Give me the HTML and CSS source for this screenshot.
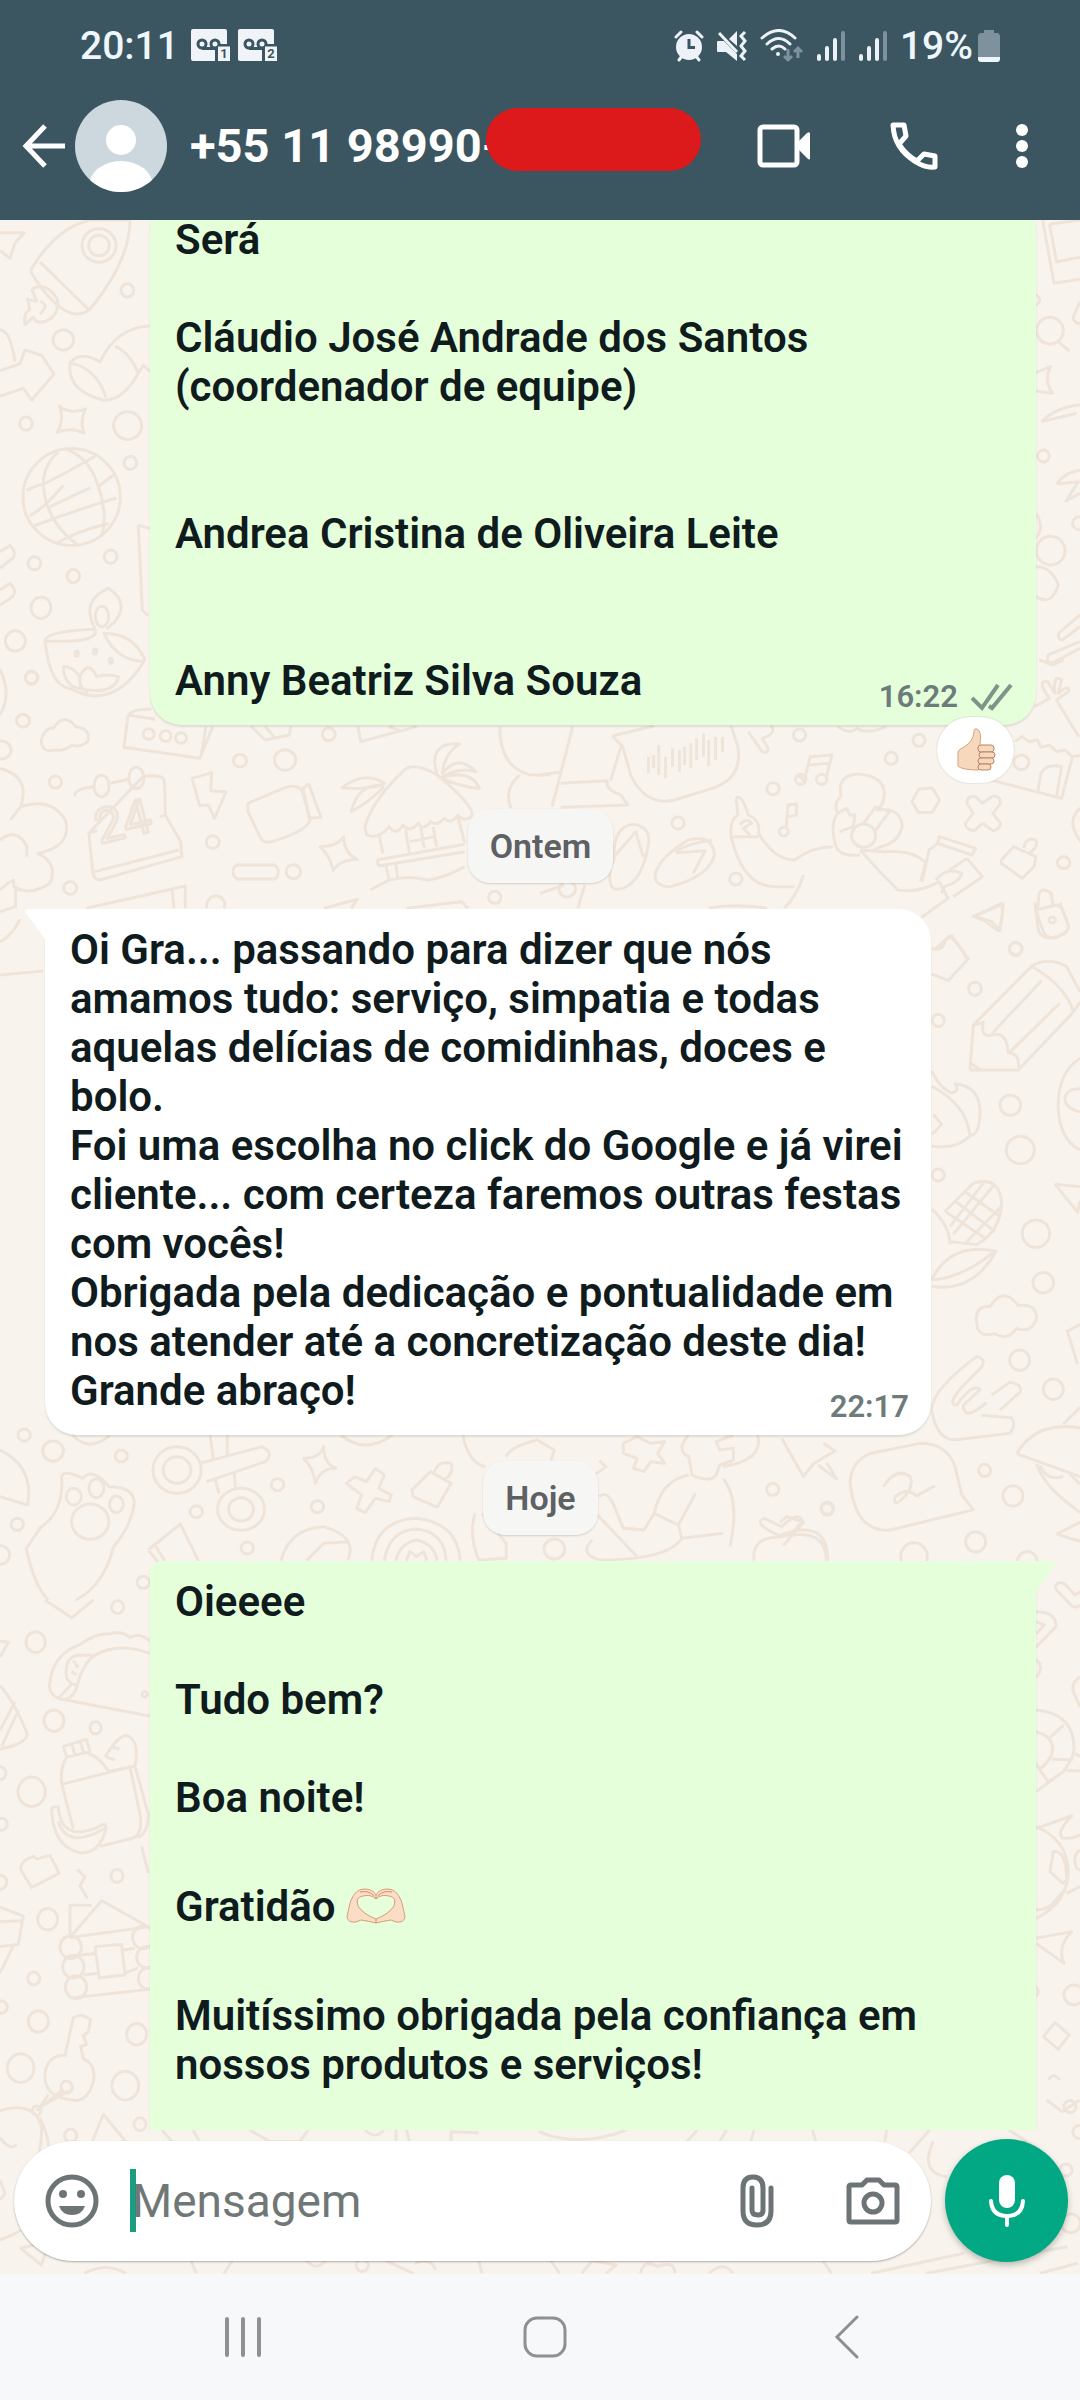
FILE: index.html
```html
<!DOCTYPE html>
<html lang="pt-BR">
<head>
  <meta charset="UTF-8" />
  <meta name="viewport" content="width=device-width, initial-scale=1.0"/>
  <title>+55 11 98990</title>
  <link rel="stylesheet" href="styles.css">
</head>
<body>
  <div class="phone">
    <header class="top">
      <div class="status">
        <span class="clock">20:11</span>
        <svg class="voicemail" width="40" height="34" viewBox="0 0 40 34">
          <path d="M2 0H34Q36 0 36 2V15H28L24 19V32H2Q0 32 0 30V2Q0 0 2 0Z" fill="#f0f4f9"/>
          <g fill="none" stroke="#3b5561" stroke-width="3"><circle cx="11" cy="15" r="4"/><circle cx="24" cy="15" r="4"/><path d="M11 19.500H24"/></g>
          <path d="M27 17.500H39V32H27Z" fill="#f0f4f9"/>
          <text x="33" y="29" text-anchor="middle">1</text>
        </svg>
        <svg class="voicemail" width="40" height="34" viewBox="0 0 40 34">
          <path d="M2 0H34Q36 0 36 2V15H28L24 19V32H2Q0 32 0 30V2Q0 0 2 0Z" fill="#f0f4f9"/>
          <g fill="none" stroke="#3b5561" stroke-width="3"><circle cx="11" cy="15" r="4"/><circle cx="24" cy="15" r="4"/><path d="M11 19.500H24"/></g>
          <path d="M27 17.500H39V32H27Z" fill="#f0f4f9"/>
          <text x="33" y="29" text-anchor="middle">2</text>
        </svg>
        <div class="status-right">
          <svg width="30" height="32" viewBox="0 0 30 32">
            <circle cx="15" cy="17" r="13" fill="#edf2f8"/>
            <path d="M2 7L7 2M28 7L23 2M5 30L8 26M25 30L22 26" stroke="#edf2f8" stroke-width="3" stroke-linecap="round"/>
            <path d="M15 9V17.500H21" fill="none" stroke="#3b5561" stroke-width="3"/>
          </svg>
          <svg width="32" height="32" viewBox="0 0 32 32">
            <path d="M1 12Q1 11 2 11H8L21 24V31L10 22H2Q1 22 1 21ZM13 9L21 1V16Z" fill="#edf2f8"/>
            <path d="M3 3L21 22M29 2L25 6L29 11L25 16L29 21L25 26L29 30" fill="none" stroke="#edf2f8" stroke-width="3"/>
          </svg>
          <svg width="44" height="34" viewBox="0 0 44 34">
            <g fill="none" stroke="#edf2f8" stroke-width="3" stroke-linecap="round"><path d="M2 9Q19-6 35 9M7 15Q19 4 30 15M12 20Q19 14 25 20"/></g>
            <circle cx="18" cy="25" r="2" fill="#edf2f8"/>
            <path d="M28 20V31M24 27L28 31L32 27M38 29V19M34 23L38 19L42 23" fill="none" stroke="#7d929d" stroke-width="3"/>
          </svg>
          <svg width="30" height="32" viewBox="0 0 30 32">
            <path d="M3 26V29M11 18V29M19 10V29" stroke="#edf2f8" stroke-width="4" stroke-linecap="round"/>
            <path d="M27 3V29" stroke="#7d929d" stroke-width="4" stroke-linecap="round"/>
          </svg>
          <svg width="30" height="32" viewBox="0 0 30 32">
            <path d="M3 26V29M11 18V29M19 10V29" stroke="#edf2f8" stroke-width="4" stroke-linecap="round"/>
            <path d="M27 3V29" stroke="#7d929d" stroke-width="4" stroke-linecap="round"/>
          </svg>
          <span class="percent">19%</span>
          <svg width="22" height="34" viewBox="0 0 22 34">
            <path d="M6 1H16V4H19Q22 4 22 8V28H0V8Q0 4 3 4H6Z" fill="#7d929d"/>
            <path d="M0 28H22V30Q22 33 19 33H3Q0 33 0 30Z" fill="#edf7fd"/>
          </svg>
        </div>
      </div>
      <div class="appbar">
        <button class="icon-btn back" aria-label="Voltar">
          <svg width="44" height="44" viewBox="0 0 44 44" fill="none" stroke="#fff" stroke-width="5"><path d="M43 22H4M23 2L4 22L23 42"/></svg>
        </button>
        <svg class="avatar" width="92" height="92" viewBox="0 0 92 92">
          <defs><clipPath id="round"><circle cx="46" cy="46" r="46"/></clipPath></defs>
          <g clip-path="url(#round)"><rect width="92" height="92" fill="#cdd8de"/><circle cx="46" cy="40" r="15" fill="#fff"/><ellipse cx="46" cy="86" rx="32" ry="25" fill="#fff"/></g>
        </svg>
        <h1>+55 11 98990-</h1>
        <span class="redacted"></span>
        <div class="actions">
          <button class="icon-btn" aria-label="Chamada de vídeo">
            <svg width="56" height="48" viewBox="0 0 56 48"><rect x="4" y="5" width="37" height="38" rx="3" fill="none" stroke="#fff" stroke-width="5"/><path d="M42 20L51 11Q54 9 54 12V36Q54 39 51 36L42 27Z" fill="#fff"/></svg>
          </button>
          <button class="icon-btn" aria-label="Ligar">
            <svg width="48" height="48" viewBox="0 0 48 48" fill="none" stroke="#fff" stroke-width="5" stroke-linejoin="round"><path d="M3 3H14L16 14L9 22Q16 33 27 39L34 32L45 34V45Q35 46 26 40Q4 27 3 3Z"/></svg>
          </button>
          <button class="icon-btn" aria-label="Mais opções">
            <svg width="12" height="48" viewBox="0 0 12 48" fill="#fff"><circle cx="6" cy="8" r="6"/><circle cx="6" cy="24" r="6"/><circle cx="6" cy="40" r="6"/></svg>
          </button>
        </div>
      </div>
    </header>

    <main class="chat">
      <svg class="wallpaper" viewBox="0 220 1080 2054" preserveAspectRatio="xMidYMin slice" aria-hidden="true">
        <!-- rocket, boot, globe, lamp -->
        <g transform="translate(0 220) scale(.3333 .5102)">
          <path d="M95 95Q170 15 270 0H390Q390 80 270 175Q200 210 100 110Q90 102 95 95ZM120 82L265 175M95 135Q140 120 172 155Q180 185 140 198Q105 205 100 190L75 205Q70 180 90 175L82 155L110 160L95 135M120 160Q150 165 120 185"/>
          <ellipse cx="297" cy="50" rx="51" ry="33"/><ellipse cx="297" cy="50" rx="31" ry="20"/>
          <path d="M0 25L73 25L45 45L30 75L0 60M0 215Q30 215 45 278M0 295L60 282L75 255L125 265L162 302L95 353L70 330L0 345M210 280Q240 255 300 278Q350 210 450 208M345 247Q390 260 415 300Q370 355 310 353Q200 335 210 280Q290 290 318 348M415 300L430 285L450 297"/>
          <path d="M178 365Q215 382 257 370Q238 395 252 418Q215 405 172 416Q195 390 178 365Z"/>
          <ellipse cx="215" cy="543" rx="146" ry="95"/>
          <path d="M80 530Q110 520 130 518Q200 495 285 463M90 580Q140 560 190 520M140 565L270 525M100 600Q220 570 350 545M165 635Q230 610 325 595M130 518Q130 480 175 455M130 518Q135 590 235 638M195 448Q270 465 295 523Q325 580 305 620M295 523Q340 500 345 498"/>
          <path d="M135 825Q140 805 285 802Q300 830 140 825ZM135 825Q150 915 210 918Q340 965 435 862Q400 810 312 810Q350 865 435 865M190 875Q220 875 240 895Q265 860 290 895Q325 890 355 895Q345 930 250 920Q190 915 190 875ZM240 895Q235 920 265 925M285 802Q240 745 325 722Q390 750 345 787Q330 795 320 802"/>
          <circle cx="306" cy="777" r="20"/><circle cx="230" cy="850" r="5"/><circle cx="285" cy="846" r="5"/><circle cx="333" cy="864" r="5"/>
          <ellipse cx="190" cy="235" rx="31" ry="20"/><ellipse cx="382" cy="138" rx="19" ry="13"/><ellipse cx="78" cy="399" rx="19" ry="13"/><ellipse cx="383" cy="403" rx="42" ry="27"/><ellipse cx="391" cy="476" rx="19" ry="13"/><ellipse cx="103" cy="673" rx="19" ry="13"/><ellipse cx="220" cy="698" rx="19" ry="13"/><ellipse cx="332" cy="660" rx="19" ry="13"/><ellipse cx="123" cy="760" rx="30" ry="21"/><ellipse cx="46" cy="825" rx="30" ry="20"/><ellipse cx="94" cy="897" rx="18" ry="13"/>
          <path d="M0 650L30 638Q50 650 40 662L0 682M0 725L30 712Q50 725 40 737L0 755M415 598L450 605M415 598L427 765L445 775M0 880Q20 910 18 930Q18 950 0 970M0 1480L130 1472M0 1415Q40 1400 60 1370"/>
        </g>
        <!-- calendar, camera, beach hut -->
        <g transform="translate(0 660) scale(.3443 .3333)">
          <circle cx="67" cy="182" r="19"/><circle cx="161" cy="366" r="18"/><circle cx="92" cy="53" r="18"/><circle cx="5" cy="270" r="27"/><circle cx="697" cy="302" r="19"/><circle cx="828" cy="300" r="31"/><circle cx="955" cy="223" r="19"/><circle cx="618" cy="546" r="19"/><circle cx="852" cy="635" r="21"/><circle cx="204" cy="684" r="19"/><circle cx="1437" cy="712" r="18"/>
          <path d="M125 225Q140 200 155 205Q185 155 220 200Q265 205 255 245Q230 265 210 255Q185 275 160 270Q120 280 120 240Z"/>
          <path d="M372 165L360 262L580 295L618 200M372 165Q390 145 440 148M372 165L450 178M585 285L598 200"/>
          <circle cx="432" cy="222" r="16"/><circle cx="481" cy="228" r="16"/><circle cx="526" cy="234" r="16"/>
          <path d="M217 410Q215 385 275 380M310 372L375 358M415 350Q475 340 478 365L480 465L525 545L528 590L290 660Q275 660 270 640L258 520ZM258 520L282 512M275 635L520 570M465 470L480 465"/>
          <ellipse cx="295" cy="378" rx="22" ry="32"/><ellipse cx="396" cy="354" rx="22" ry="32"/>
          <text x="290" y="552" font-size="145" transform="rotate(-14 290 552)">24</text>
          <path d="M558 355L615 338L612 392L657 395L623 475L605 435L580 437ZM720 430L830 382Q870 370 880 400L900 480Q895 510 800 542Q765 555 755 530L720 455ZM880 385L897 372L932 472L900 475Z"/>
          <path d="M930 560Q980 560 998 530Q1000 580 1038 598Q985 600 968 632Q960 590 930 560ZM690 615H795Q810 620 808 640Q805 657 795 657H690Q677 650 677 635Q677 620 690 615Z"/>
          <path d="M1060 500Q1080 420 1180 325Q1210 310 1270 345Q1370 430 1372 465Q1350 490 1330 465Q1310 495 1290 475Q1270 500 1250 485Q1230 515 1215 490Q1190 520 1170 495Q1150 530 1130 500Q1100 540 1065 525ZM1100 520L1112 580M1178 510L1190 585M1258 500L1268 560M1330 470L1350 550M1190 545L1262 530M1222 500L1232 565M1095 600L1350 553M1100 618L1350 575M1095 600L1100 618M1120 615L1130 660L1155 655L1150 610M1075 690L1130 660Q1190 645 1240 660Q1290 655 1350 620M1120 372Q1060 330 993 383Q1050 390 1112 375Q1040 370 1020 455Q1080 420 1115 380M1270 345Q1240 245 1335 252Q1290 280 1285 340Q1330 280 1382 335Q1340 320 1285 350Q1370 330 1392 385Q1330 380 1280 352"/>
          <path d="M0 325Q90 350 60 440Q150 410 190 480Q210 560 110 580Q170 610 145 670Q90 710 40 680V660Q20 670 0 690M0 540Q50 500 78 560V590M30 480L60 440M45 680V740L0 755M250 745L538 678V745M500 690L505 745M600 745Q600 700 640 710Q660 730 650 745M940 745L1038 718L1020 745M1180 745L1340 725L1360 745M730 200L770 240L840 225L845 200M770 200L800 235M1040 200L1048 245L1210 200M1130 200L1160 212M1452 200Q1450 320 1540 345H1600M1510 345Q1460 390 1485 445"/>
        </g>
        <!-- voice note, sandals, dancer -->
        <g transform="translate(540 660) scale(.3443 .3333)">
          <path d="M95 200L35 440M60 370L195 362Q190 390 235 405L255 435L60 442M0 345L60 335M235 260L205 362M210 228L330 198M210 228L240 260L265 350Q310 440 390 420L500 385Q590 355 575 260L555 198M315 290V340M330 285V325M345 255V345M365 290V355M385 265V320M405 270V335M420 260V315M438 250V325M455 235V300M475 220V290M490 240V318M510 230V300M530 230V275"/>
          <path d="M605 215L645 275Q665 285 660 260L645 235Q690 220 670 198M745 350Q760 345 770 370M770 350L785 290L848 285L832 350M782 315L840 310M715 505L720 435L745 432L745 465L722 470"/>
          <circle cx="757" cy="358" r="15"/><circle cx="818" cy="358" r="15"/><circle cx="708" cy="515" r="13"/><circle cx="1020" cy="295" r="18"/><circle cx="754" cy="225" r="18"/><circle cx="677" cy="386" r="18"/><circle cx="401" cy="489" r="18"/><circle cx="569" cy="657" r="18"/><circle cx="1101" cy="241" r="18"/><circle cx="1521" cy="608" r="18"/><circle cx="1382" cy="866" r="18"/><circle cx="1398" cy="307" r="22"/><circle cx="940" cy="527" r="35"/><circle cx="79" cy="687" r="24"/>
          <path d="M215 600Q210 500 270 493Q330 500 312 570Q290 680 225 688Q195 690 205 620ZM215 590L278 515L300 590M335 640Q350 590 430 540Q500 520 507 585Q490 650 380 680Q330 680 335 640ZM395 578L480 572L445 640M395 578Q410 555 500 540"/>
          <path d="M875 410Q860 345 925 342Q1000 350 1000 400Q1000 440 975 450M875 410Q850 430 865 460Q840 490 860 560Q870 590 930 585M975 450Q1050 440 1052 500Q1040 550 990 560L970 570M940 490L975 440L1015 455L975 510M865 460L890 445L900 465L915 465L910 500L870 515M570 415Q585 400 605 465Q640 480 635 520Q680 600 740 600Q790 560 850 560M570 415L575 465Q550 480 555 530Q590 680 680 680L740 680M560 530H635M580 495Q600 470 615 490L590 505L610 525M765 645Q750 700 710 745M930 570Q990 640 1040 690Q1100 700 1160 665M930 570L1000 575Q1090 570 1120 610L1105 665M1160 530L1265 565L1255 585L1155 550ZM1155 550L1130 570L1110 665M1240 595L1285 650L1200 710M1150 660Q1180 620 1225 640Q1220 665 1175 680L1165 700M1240 595L1190 630M1160 665L1185 715L1105 775"/>
          <path d="M1080 425L1100 387L1140 384L1160 420L1140 457L1100 458ZM1240 430Q1240 405 1265 410L1285 430L1315 408Q1335 405 1338 430L1315 460L1338 490Q1335 510 1315 512L1285 490L1262 512Q1235 510 1235 490L1258 460ZM1340 600L1375 560L1440 590L1435 620L1400 655L1340 610ZM1405 565Q1410 530 1440 540Q1450 560 1420 580M1260 770L1340 730Q1350 770 1330 812L1290 782ZM1440 750L1500 735Q1520 740 1535 800Q1535 820 1500 832Q1470 840 1460 810ZM1445 750L1450 700Q1460 680 1485 700L1490 735M1145 870L1190 828Q1230 870 1240 900"/>
          <circle cx="1488" cy="780" r="9"/>
          <path d="M1380 245L1400 230L1420 245L1445 240L1455 262L1480 255L1500 275L1525 270L1545 290L1575 285M1310 360L1515 415L1545 295M1445 400L1455 340Q1470 310 1515 320L1500 410M1435 140L1480 115Q1440 60 1475 65L1495 100Q1490 40 1515 60L1505 100Q1540 70 1535 95L1500 120L1565 230M1575 440Q1520 480 1575 550M1450 0L1490 15L1520 0"/>
          <path d="M865 200Q900 225 920 205Q950 225 1005 200M490 745Q560 730 660 745M110 745L130 675M0 700L70 675"/>
        </g>
        <!-- polaroid, lens, torn paper -->
        <g transform="translate(930 220) scale(.3333)">
          <path d="M338 0L372 190L450 178M358 12L450 0M358 12L380 125L450 112M385 365L418 393M450 245L430 290Q430 310 450 310M318 458L362 440Q340 480 368 520L318 513M335 605Q380 560 450 555M335 605L440 580M380 792Q400 760 450 750M380 792L445 785L408 843L450 820M318 880Q345 920 318 955M318 1040Q365 1040 385 1095Q365 1160 318 1130M450 1185L385 1240Q385 1265 400 1258L450 1220M450 1265L355 1305Q345 1330 370 1328L450 1285"/>
          <circle cx="360" cy="332" r="40"/><circle cx="340" cy="708" r="18"/><circle cx="362" cy="992" r="43"/><circle cx="448" cy="910" r="20"/><circle cx="315" cy="240" r="14"/>
        </g>
        <!-- pencil, corn, cloud, hand -->
        <g transform="translate(780 900) scale(.3333 .5102)">
          <path d="M455 95Q490 100 495 80L515 70L565 115L505 158L455 145M570 333L580 245L755 130Q800 110 860 130L900 180M570 333H715L880 220M580 245L610 240Q600 270 635 265Q680 255 685 300Q720 300 715 328M755 130Q860 170 880 220L900 200M635 262L785 158M690 298L840 202M572 320L600 332M900 310Q830 340 835 410Q840 470 900 490M900 370Q855 370 855 392Q860 410 900 415"/>
          <path d="M455 335Q480 370 515 378Q540 375 525 360Q600 365 600 415Q600 460 570 462Q530 490 455 482M570 462Q560 400 455 365M455 460L485 440L460 420M455 605Q510 640 510 675M495 610L580 555Q660 540 665 595Q660 650 590 675L510 670M495 610L620 665M525 590L645 650M550 570L660 620M520 655L640 560M560 670L665 600M510 640L610 555M455 745Q510 670 648 688Q580 770 455 757M455 745Q550 740 640 690"/>
          <path d="M590 825Q585 795 630 797Q670 755 715 795Q770 790 770 820Q755 850 710 840Q680 865 645 850Q590 860 590 825ZM825 557L900 562M825 557L893 612L900 590M900 832L862 845L893 910M580 32L670 8L660 60L635 42ZM765 5L775 60Q790 80 830 72Q865 65 865 50L840 5M455 1000Q455 960 590 895Q620 900 605 915L545 955Q500 990 530 990Q580 945 600 960L550 990Q550 1015 590 1000L620 985M455 1000Q470 1060 530 1058L690 1045Q710 1030 695 1015L605 1010M635 970L690 945Q730 950 720 965L660 1000"/>
          <path d="M5 1055L70 1130L100 1105L165 1080L130 1065M115 1108L170 1135L140 1103M210 1140Q215 1100 270 1085L420 1065Q500 1065 525 1110L545 1165L580 1195L330 1235Q225 1240 210 1140ZM310 1150Q350 1110 390 1130Q405 1150 365 1175Q340 1190 345 1170Q380 1150 410 1168L465 1148M710 1085Q770 1020 900 1035M710 1085L900 1130M770 1105Q790 1150 900 1200M780 1108Q800 1140 850 1130M870 1125L900 1145M830 1243L900 1220M830 1243L900 1257M850 1027L900 995M0 1245Q145 1210 143 1295M0 1220L20 1208L70 1220L10 1265"/>
          <ellipse cx="707" cy="96" rx="19" ry="13"/><ellipse cx="585" cy="174" rx="19" ry="13"/><ellipse cx="475" cy="236" rx="18" ry="12"/><ellipse cx="691" cy="402" rx="31" ry="20"/><ellipse cx="721" cy="490" rx="42" ry="27"/><ellipse cx="475" cy="539" rx="18" ry="12"/><ellipse cx="768" cy="654" rx="41" ry="27"/><ellipse cx="790" cy="750" rx="31" ry="20"/><ellipse cx="719" cy="902" rx="30" ry="20"/><ellipse cx="820" cy="959" rx="30" ry="20"/><ellipse cx="614" cy="1118" rx="18" ry="12"/><ellipse cx="699" cy="1168" rx="30" ry="20"/><ellipse cx="587" cy="1258" rx="30" ry="20"/><ellipse cx="142" cy="1192" rx="18" ry="12"/><ellipse cx="402" cy="1287" rx="40" ry="27"/><ellipse cx="742" cy="1297" rx="30" ry="20"/>
        </g>
        <!-- paw, scissors, rainbow, reader -->
        <g transform="translate(0 1400) scale(.6887 .3333)">
          <path d="M0 150Q50 200 40 315L0 290M90 245Q85 200 120 235Q135 200 158 260Q195 260 195 310Q190 380 165 440Q150 560 110 600M90 245Q90 340 60 380L38 445Q50 560 70 600"/>
          <ellipse cx="107" cy="290" rx="11" ry="25"/><ellipse cx="140" cy="265" rx="11" ry="28"/><ellipse cx="169" cy="313" rx="10" ry="25"/><ellipse cx="131" cy="365" rx="27" ry="53"/><ellipse cx="257" cy="210" rx="35" ry="70"/><ellipse cx="257" cy="210" rx="20" ry="40"/><ellipse cx="350" cy="328" rx="34" ry="63"/><ellipse cx="350" cy="328" rx="18" ry="35"/>
          <path d="M290 190L380 140Q400 160 385 185L300 245M305 105L310 180M330 105V165M312 235L318 280M340 220L342 265M440 175Q465 175 470 140Q470 190 488 205Q465 205 458 250Q455 200 440 175M503 250L515 230L532 245L545 205L558 225L550 265L568 285L565 305L545 295L530 338L518 325L525 285ZM598 270L625 215L655 250L635 322L600 290ZM630 220Q635 180 655 190Q660 220 645 240M215 450L262 372L290 490M215 450L235 500M225 435L240 485M408 482Q420 385 470 380Q520 410 505 480M470 430L505 425M470 430L445 482M540 482Q545 360 605 355Q665 370 668 482M558 482Q565 390 605 387Q645 395 648 482M575 482Q580 430 605 420Q630 430 635 482M590 482L595 455L605 470L615 455L620 482"/>
          <path d="M672 105Q680 190 705 200M735 170Q740 140 780 120L805 150L800 182M860 230L880 200L870 182M905 130L925 110L945 130L965 125L955 160L965 190L945 185L935 215L920 205L925 175L905 160ZM1000 105Q980 150 1000 170L1005 225Q1030 250 1040 225L1045 195L1065 180V145L1045 150L1040 125L1065 105M1100 105Q1110 180 1050 200M1000 225Q960 240 950 340L985 375L1010 280M1050 235Q1075 300 1060 440M985 375L990 415L1050 400M870 290Q880 270 890 310L905 385L935 390L950 340M860 420Q840 460 870 480Q970 480 990 415M865 340L925 470M690 340Q680 400 695 480L735 475L735 430L700 340M1095 482Q1090 410 1135 410Q1200 380 1200 482M1135 410Q1090 370 1110 355L1135 380Q1160 330 1165 365L1145 410M495 105Q530 165 570 105M105 105Q130 160 160 105"/>
          <ellipse cx="77" cy="153" rx="15" ry="30"/><ellipse cx="35" cy="105" rx="9" ry="18"/><ellipse cx="176" cy="168" rx="9" ry="18"/><ellipse cx="403" cy="254" rx="9" ry="18"/><ellipse cx="285" cy="335" rx="9" ry="18"/><ellipse cx="461" cy="320" rx="9" ry="18"/><ellipse cx="359" cy="444" rx="9" ry="18"/><ellipse cx="25" cy="373" rx="9" ry="18"/><ellipse cx="0" cy="465" rx="14" ry="28"/><ellipse cx="805" cy="447" rx="15" ry="30"/><ellipse cx="1122" cy="268" rx="9" ry="18"/><ellipse cx="1201" cy="328" rx="9" ry="18"/><ellipse cx="208" cy="547" rx="9" ry="18"/>
        </g>
        <!-- taco, groceries, log cabin, key -->
        <g transform="translate(0 1600) scale(.3333 .3571)">
          <path d="M135 0L215 50L280 0M0 115L25 118L0 160M150 230Q160 150 240 125Q290 90 330 95Q365 85 390 105Q420 90 450 115M450 150Q350 115 275 160Q245 190 235 230Q220 285 180 278Q140 260 150 230M200 220Q190 160 235 155L275 155M200 220L215 235L175 275M215 235L235 240M220 170L235 190M215 200L230 210M185 278L450 325M0 240Q40 280 80 370Q90 400 0 418M45 285L0 365M55 310L5 410"/>
          <circle cx="107" cy="118" r="29"/><circle cx="162" cy="338" r="30"/><circle cx="287" cy="358" r="17"/><circle cx="95" cy="537" r="41"/><circle cx="5" cy="628" r="17"/><circle cx="353" cy="20" r="18"/><circle cx="434" cy="264" r="8"/><circle cx="351" cy="773" r="18"/><circle cx="143" cy="894" r="30"/><circle cx="101" cy="1060" r="18"/><circle cx="115" cy="1180" r="30"/><circle cx="410" cy="1216" r="30"/><circle cx="62" cy="1311" r="40"/><circle cx="376" cy="1360" r="40"/><circle cx="420" cy="1468" r="18"/><circle cx="212" cy="1500" r="18"/><circle cx="5" cy="1140" r="17"/><circle cx="0" cy="485" r="18"/><circle cx="0" cy="790" r="20"/>
          <path d="M190 410L260 390L270 425L200 440ZM215 400L225 435M240 395L252 430M200 440Q180 470 185 515L220 640M265 430Q300 440 325 480M190 515L390 468L420 600Q430 660 395 668L300 690M315 440Q360 370 385 382Q420 395 405 465L325 480M320 440L345 448M335 410L358 418M405 465L445 600Q445 650 415 665M155 580H175Q180 650 240 650Q280 645 305 630Q320 625 318 640Q300 710 240 708Q155 690 155 580M175 620Q200 700 315 640"/>
          <path d="M62 755Q60 730 100 718L110 725L150 715L178 765L95 805ZM232 755L255 775L240 800L262 835M210 945L210 855L275 855M210 945L305 842L445 915L210 945M240 995L285 990M285 970L365 965L375 1050L298 1058ZM370 980L405 975M375 1045L415 1030M250 1050L295 1045M225 1113L450 1090M0 860L70 885L55 965L0 970M0 900L65 898M40 968L0 1045"/>
          <circle cx="212" cy="972" r="32"/><circle cx="220" cy="1027" r="32"/><circle cx="228" cy="1084" r="32"/><circle cx="430" cy="945" r="32"/><circle cx="440" cy="1000" r="30"/><circle cx="445" cy="1060" r="30"/>
          <path d="M195 1275L220 1170Q240 1155 272 1175L265 1210L250 1220L260 1245L242 1250L250 1285Q290 1300 280 1350Q260 1410 215 1400Q130 1390 135 1330Q140 1275 195 1275ZM190 1370L110 1430M145 1385L120 1420L205 1375M0 1430Q110 1400 125 1480Q125 1560 90 1620M120 1450Q145 1500 145 1530M275 1520L310 1440L380 1520M0 1505Q30 1545 50 1525M425 690L445 765"/>
          <circle cx="200" cy="1364" r="17"/><circle cx="110" cy="1430" r="13"/>
        </g>
        <!-- right edge, lower part -->
        <g transform="translate(930 1560) scale(.3333)">
          <path d="M375 85Q380 60 405 72L435 105L450 95M375 85L425 138Q440 145 450 135M318 155Q380 155 378 200L318 262M318 185L343 195L318 222M318 298Q345 320 318 353M318 450Q430 460 432 560Q435 590 400 635L318 695M318 515Q370 530 368 570Q365 600 328 628L355 665L400 635M360 532L402 495M365 597L428 600M318 610L328 628M435 580L450 590M410 632H450M450 350Q420 370 432 400L450 440M318 805L425 768Q375 820 400 835Q430 835 450 825M318 800Q415 840 415 940Q410 1030 318 1075M318 1050Q360 1050 378 1018L405 990M370 875Q410 870 410 960L398 970L360 935ZM410 1000L450 980M318 1135L425 1115Q380 1160 402 1210L318 1150M375 1388L418 1425L385 1468L340 1430ZM450 870Q425 890 440 925L450 930M355 1560Q370 1535 390 1560"/>
          <circle cx="432" cy="1305" r="30"/><circle cx="310" cy="1295" r="15"/><circle cx="420" cy="1640" r="18"/>
        </g>
        <!-- strip round the message box -->
        <g transform="translate(0 2100) scale(.3443 .3333)">
          <path d="M470 90L500 125M560 90L580 125M725 90L785 125H870L895 90M1060 90Q1090 120 1115 90M1150 90V125M1180 90L1190 125M1310 125V95L1390 98M1565 95Q1680 145 1820 90M1995 125L2025 90M2090 125L2110 90M2180 125L2190 90M2360 90L2370 125M2570 125L2575 90M2640 160L2700 90M2930 90L3020 150M2710 125Q2670 220 2750 230"/>
          <path d="M60 445L100 435L135 450L120 495ZM245 520Q310 485 365 520M555 482L570 520M650 520L675 482M890 482Q920 515 945 482M1120 482L1200 520M1205 490Q1250 470 1265 510M1390 482L1400 520M1600 482L1625 520M1690 520L1720 482L1790 495L1760 520M1860 520Q1870 475 1910 500Q1960 480 1960 520M2060 520Q2100 480 2130 520M2390 482L2415 520M2530 520L2800 460M2690 520L3100 440M3020 520L3130 490M3040 0L3085 35L3136 0M0 240L15 280L0 300M0 420Q50 400 60 390"/>
          <circle cx="1052" cy="496" r="18"/><circle cx="3096" cy="210" r="18"/><circle cx="3110" cy="370" r="28"/><circle cx="3136" cy="96" r="20"/>
        </g>
      </svg>

      <section class="messages">
        <article class="bubble sent first">
          <p>Será</p>
          <p>Cláudio José Andrade dos Santos<br>(coordenador de equipe)</p>
          <p class="spaced">Andrea Cristina de Oliveira Leite</p>
          <p class="spaced">Anny Beatriz Silva Souza</p>
          <span class="meta">
            <time>16:22</time>
            <svg width="44" height="30" viewBox="0 0 44 30" fill="none" stroke="#7d948b" stroke-width="4"><path d="M2 16L12 26L28 3M19 24L22 26L41 3"/></svg>
          </span>
          <button class="reaction" aria-label="Reação: polegar para cima">
            <svg width="42" height="44" viewBox="0 0 40 44">
              <path d="M2 24Q2 22 8 19Q17 14 18 4Q18 0 21 1Q26 3 24 16V21L25 38L22 42Q6 42 2 38Z" fill="#f8d8bd" stroke="#d5a27e" stroke-width="1"/>
              <g fill="#f8d8bd" stroke="#b98460" stroke-width="1"><rect x="22" y="17" width="16" height="7" rx="3"/><rect x="23" y="24" width="16" height="6" rx="3"/><rect x="22" y="30" width="16" height="6" rx="3"/><rect x="22" y="36" width="13" height="6" rx="3"/></g>
            </svg>
          </button>
        </article>

        <span class="day after-reaction">Ontem</span>

        <article class="bubble received">
          <svg class="tail" width="20" height="30" viewBox="0 0 20 30"><path d="M3 0H20V30L1 4Q-1 0 3 0Z" fill="#fff"/></svg>
          <p>Oi Gra... passando para dizer que nós amamos tudo: serviço, simpatia e todas aquelas delícias de comidinhas, doces e bolo.<br>Foi uma escolha no click do Google e já virei cliente... com certeza faremos outras festas com vocês!<br>Obrigada pela dedicação e pontualidade em nos atender até a concretização deste dia!<br>Grande abraço!</p>
          <span class="meta"><time>22:17</time></span>
        </article>

        <span class="day">Hoje</span>

        <article class="bubble sent last">
          <svg class="tail" width="20" height="30" viewBox="0 0 20 30"><path d="M17 0H0V30L19 4Q21 0 17 0Z" fill="#e4ffda"/></svg>
          <p>Oieeee</p>
          <p>Tudo bem?</p>
          <p>Boa noite!</p>
          <p class="with-emoji">Gratidão
            <svg width="60" height="36" viewBox="0 0 60 36" role="img" aria-label="mãos em coração">
              <path d="M1 29Q3 18 5 12Q10 1 18 1Q27 1 30 7Q33 1 42 1Q50 1 55 12Q57 18 59 29Q58 35 50 34L45 32Q38 33 30 35Q22 33 15 32L10 34Q2 35 1 29ZM30 31Q17 26 12 18Q9 9 17 8Q25 6 30 11Q35 6 43 8Q51 9 48 18Q43 26 30 31Z" fill="#fbdcc4" fill-rule="evenodd" stroke="#d99d7a" stroke-width="1"/>
              <path d="M14 4Q23 2 28 8M46 4Q37 2 32 8M30 7V11M30 31V35" fill="none" stroke="#d08f6b" stroke-width="1"/>
            </svg>
          </p>
          <p>Muitíssimo obrigada pela confiança em nossos produtos e serviços!</p>
        </article>
      </section>

      <form class="composer">
        <div class="field">
          <button type="button" class="icon-btn" aria-label="Emoji">
            <svg width="54" height="54" viewBox="0 0 54 54"><circle cx="27" cy="27" r="24" fill="none" stroke="#6c7476" stroke-width="5"/><circle cx="18" cy="20" r="4" fill="#6c7476"/><circle cx="36" cy="20" r="4" fill="#6c7476"/><path d="M14 32H40Q37 41 27 41Q17 41 14 32Z" fill="#6c7476"/></svg>
          </button>
          <span class="caret"></span>
          <input type="text" placeholder="Mensagem" aria-label="Mensagem">
          <button type="button" class="icon-btn" aria-label="Anexar">
            <svg width="34" height="54" viewBox="0 0 34 54" fill="none" stroke="#6c7476" stroke-width="5" stroke-linecap="round"><path d="M31 14V37Q31 51 17 51Q3 51 3 37V14Q3 3 13 3Q23 3 23 14V36Q23 41 18 41Q12 41 12 36V14"/></svg>
          </button>
          <button type="button" class="icon-btn camera" aria-label="Câmera">
            <svg width="54" height="50" viewBox="0 0 54 50" fill="none" stroke="#6c7476" stroke-width="5" stroke-linejoin="round"><path d="M5 9H16L21 4H33L38 9H49Q51 9 51 11V44Q51 46 49 46H5Q3 46 3 44V11Q3 9 5 9Z"/><circle cx="27" cy="27" r="9"/></svg>
          </button>
        </div>
        <button type="button" class="mic" aria-label="Gravar áudio">
          <svg width="38" height="52" viewBox="0 0 38 52"><rect x="11" y="0" width="16" height="33" rx="8" fill="#fff"/><path d="M3 26Q4 41 19 41Q34 41 35 26M19 41V50" fill="none" stroke="#fff" stroke-width="4" stroke-linecap="round"/></svg>
        </button>
      </form>
    </main>

    <nav class="navbar">
      <button class="icon-btn" aria-label="Recentes">
        <svg width="44" height="44" viewBox="0 0 44 44" stroke="#8f9092" stroke-width="4" stroke-linecap="round"><path d="M6 4V40M22 4V40M38 4V40"/></svg>
      </button>
      <button class="icon-btn" aria-label="Início">
        <svg width="44" height="44" viewBox="0 0 44 44" fill="none" stroke="#8f9092" stroke-width="3"><rect x="2" y="3" width="40" height="38" rx="12"/></svg>
      </button>
      <button class="icon-btn" aria-label="Voltar">
        <svg width="44" height="44" viewBox="0 0 44 44" fill="none" stroke="#8f9092" stroke-width="3" stroke-linecap="round"><path d="M32 2L12 22L32 42"/></svg>
      </button>
    </nav>
  </div>
</body>
</html>
```
FILE: styles.css
```css
* {
  box-sizing: border-box;
}

body {
  margin: 0;
  font-family: Roboto, "Liberation Sans", sans-serif;
  color: #101b1e;
}

svg {
  display: block;
  flex-shrink: 0;
}

.phone {
  display: flex;
  flex-direction: column;
  height: 100vh;
  overflow: hidden;
}

.icon-btn {
  padding: 0;
  border: none;
  background: none;
  cursor: pointer;
}

/* header */
.top {
  background: #3b5561;
  color: #fff;
  padding-bottom: 20px;
}

.status {
  display: flex;
  align-items: center;
  height: 92px;
  padding: 0 80px;
  gap: 7px;
  font-size: 39px;
  font-weight: 500;
  color: #edf7fd;
}

.clock {
  margin-right: 5px;
}

.voicemail text {
  font-size: 13px;
  font-weight: 700;
  fill: #3b5561;
}

.status-right {
  display: flex;
  align-items: center;
  gap: 12px;
  margin-left: auto;
}

.percent {
  margin-right: -7px;
}

.appbar {
  display: flex;
  align-items: center;
  height: 108px;
  padding: 0 52px 0 22px;
}

.avatar {
  margin: 0 23px 0 9px;
}

h1 {
  margin: 0;
  font-size: 47px;
  font-weight: 700;
  line-height: 60px;
  white-space: nowrap;
}

.redacted {
  width: 215px;
  height: 63px;
  margin: 0 0 14px -14px;
  border-radius: 32px;
  background: #dc1a1b;
}

.actions {
  display: flex;
  align-items: center;
  gap: 78px;
  margin-left: auto;
}

/* chat */
.chat {
  position: relative;
  flex: 1;
  min-height: 0;
  display: flex;
  flex-direction: column;
  background: #f8f4ed;
}

.wallpaper {
  position: absolute;
  inset: 0;
  width: 100%;
  height: 100%;
  fill: none;
  stroke: #efe4da;
  stroke-width: 3;
  stroke-linejoin: round;
}

.wallpaper * {
  vector-effect: non-scaling-stroke;
}

.messages {
  position: relative;
  flex: 1;
  min-height: 0;
  overflow: hidden;
  display: flex;
  flex-direction: column;
  padding: 0 44px 0 45px;
}

.bubble {
  position: relative;
  flex-shrink: 0;
  width: 100%;
  max-width: 886px;
  padding: 16px 25px 20px;
  border-radius: 32px;
  box-shadow: 0 2px 2px rgba(0, 0, 0, 0.1);
  font-size: 42px;
  font-weight: 600;
  line-height: 49px;
}

.bubble p {
  margin: 0;
}

.sent {
  align-self: flex-end;
  background: #e4ffda;
}

.sent p + p {
  margin-top: 49px;
}

.sent p.spaced {
  margin-top: 98px;
}

.sent p.with-emoji {
  line-height: 71px;
}

.received {
  align-self: flex-start;
  background: #fff;
  border-top-left-radius: 0;
}

/* scrolled under the header */
.first {
  margin-top: -21px;
}

.last {
  border-radius: 12px 0 32px 32px;
  padding-bottom: 98px;
}

.tail {
  position: absolute;
  top: 0;
  left: -20px;
}

.last .tail {
  left: 100%;
}

.with-emoji svg {
  display: inline-block;
  vertical-align: -3px;
}

.meta {
  position: absolute;
  right: 22px;
  bottom: 10px;
  display: flex;
  align-items: center;
  gap: 12px;
  font-size: 31px;
  line-height: 36px;
  color: #6e7b7b;
}

.reaction {
  position: absolute;
  right: 22px;
  bottom: -58px;
  display: flex;
  align-items: center;
  justify-content: center;
  width: 77px;
  height: 66px;
  padding: 0;
  border: none;
  border-radius: 33px;
  background: #fff;
  box-shadow: 0 0 2px rgba(0, 0, 0, 0.2);
}

.day {
  align-self: center;
  margin: 26px 0;
  padding: 17px 22px;
  border-radius: 22px;
  background: #f6f6f5;
  box-shadow: 0 1px 2px rgba(0, 0, 0, 0.15);
  font-size: 34px;
  font-weight: 600;
  line-height: 40px;
  color: #5d6163;
}

.after-reaction {
  margin-top: 84px;
}

/* message box */
.composer {
  position: relative;
  display: flex;
  align-items: center;
  gap: 14px;
  padding: 9px 12px 12px 14px;
}

.field {
  flex: 1;
  min-width: 0;
  display: flex;
  align-items: center;
  height: 120px;
  padding: 0 31px;
  border-radius: 60px;
  background: #fff;
  box-shadow: 0 1px 2px rgba(0, 0, 0, 0.3);
}

.caret {
  width: 6px;
  height: 63px;
  margin-left: 31px;
  background: #1c9c80;
}

.field input {
  flex: 1;
  min-width: 0;
  margin-left: -4px;
  padding: 0;
  border: none;
  outline: none;
  background: none;
  font-family: inherit;
  font-size: 46px;
  color: #101b1e;
}

.field input::placeholder {
  color: #707777;
  opacity: 1;
}

.camera {
  margin-left: 72px;
}

.mic {
  display: flex;
  align-items: center;
  justify-content: center;
  width: 123px;
  height: 123px;
  padding: 0;
  border: none;
  border-radius: 50%;
  background: #02a884;
  box-shadow: 0 3px 6px rgba(0, 0, 0, 0.25);
}

/* system navigation */
.navbar {
  display: flex;
  justify-content: space-between;
  align-items: center;
  height: 126px;
  padding: 0 211px 0 221px;
  background: #f6f8fa;
}
```
